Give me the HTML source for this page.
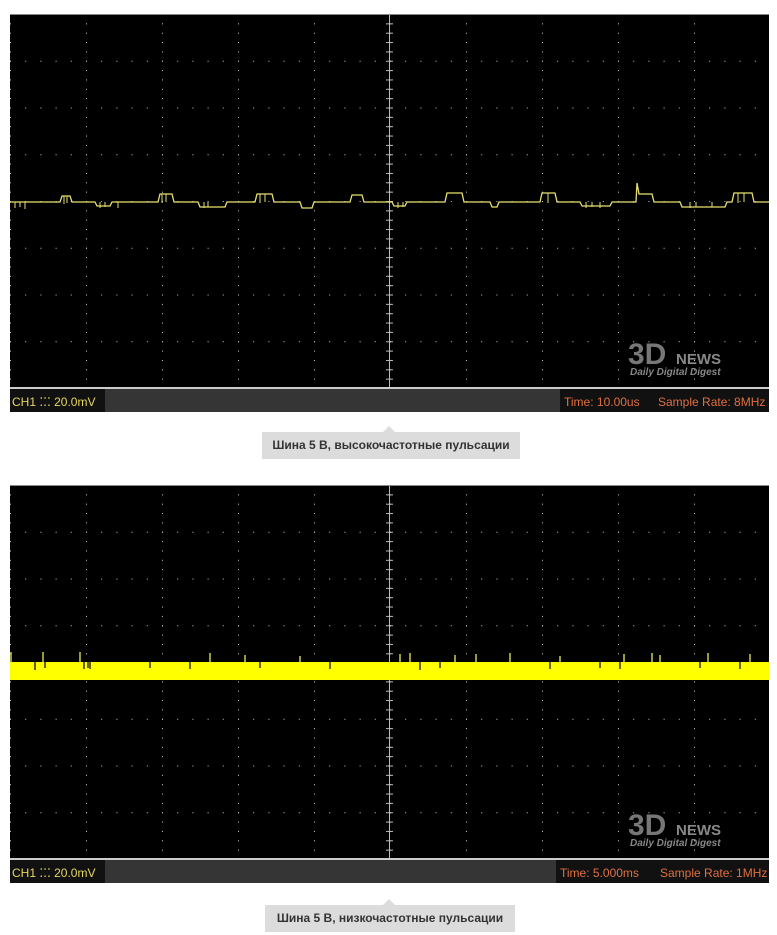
<!DOCTYPE html>
<html><head><meta charset="utf-8"><style>
html,body{margin:0;padding:0;background:#fff;width:777px;height:935px;overflow:hidden;font-family:"Liberation Sans",sans-serif}
.cap{position:absolute;background:#dcdcdc;color:#333;font:bold 12px "Liberation Sans Narrow","Liberation Sans",sans-serif;text-align:center;line-height:27px;height:27px}
.tri{position:absolute;width:0;height:0;border-left:6px solid transparent;border-right:6px solid transparent;border-bottom:6px solid #dcdcdc}
</style></head><body>
<svg width="777" height="935" style="position:absolute;left:0;top:0">
<defs>
<pattern id="pv" x="10" y="14" width="76" height="9.35" patternUnits="userSpaceOnUse"><rect x="0" y="0" width="1" height="1" fill="#ccc"/></pattern>
<pattern id="ph" x="10" y="14" width="15.2" height="46.75" patternUnits="userSpaceOnUse"><rect x="0" y="0" width="1" height="1" fill="#ccc"/></pattern>
<pattern id="pv2" x="10" y="485" width="76" height="9.35" patternUnits="userSpaceOnUse"><rect x="0" y="0" width="1" height="1" fill="#ccc"/></pattern>
<pattern id="ph2" x="10" y="485" width="15.2" height="46.75" patternUnits="userSpaceOnUse"><rect x="0" y="0" width="1" height="1" fill="#ccc"/></pattern>
<pattern id="tk" x="385" y="14" width="10" height="9.35" patternUnits="userSpaceOnUse"><rect x="1" y="0" width="7" height="1" fill="#bbb"/></pattern>
<pattern id="tk2" x="385" y="485" width="10" height="9.35" patternUnits="userSpaceOnUse"><rect x="1" y="0" width="7" height="1" fill="#bbb"/></pattern>
</defs>
<!-- scope 1 -->
<rect x="10" y="14" width="759" height="375" fill="#000"/>
<rect x="10" y="14" width="759" height="375" fill="url(#pv)"/>
<rect x="10" y="14" width="759" height="375" fill="url(#ph)"/>
<rect x="385" y="14" width="10" height="375" fill="url(#tk)"/>
<line x1="389.5" y1="14" x2="389.5" y2="389" stroke="#bbb" stroke-width="1"/>
<rect x="10" y="14" width="759" height="1" fill="#888"/>
<rect x="10" y="387" width="759" height="2" fill="#ccc"/>
<path d="M10 202 L60 202 L62 196 L70 196 L72 202 L95 202 L97 206 L110 206 L112 202 L158 202 L160 194 L172 194 L174 202 L198 202 L200 207 L225 207 L227 202 L255 202 L257 194 L272 194 L274 202 L300 202 L302 208 L312 208 L314 202 L350 202 L352 195 L362 195 L364 202 L392 202 L394 206 L405 206 L407 202 L445 202 L447 193 L462 193 L464 202 L490 202 L492 207 L497 207 L499 202 L540 202 L542 193 L555 193 L557 202 L580 202 L582 206 L610 206 L612 202 L636 202 L637 183 L639 194 L652 194 L654 202 L680 202 L682 207 L725 207 L727 202 L732 202 L734 193 L752 193 L754 202 L769 202" stroke="#e8e070" stroke-width="1.3" fill="none"/>
<path d="M15 202v6M20 202v5M25 202v7M64 196v8M67 196v7M100 202v6M105 202v5M118 202v6M162 194v9M166 194v8M204 202v6M208 202v5M260 194v9M265 194v8M398 202v6M403 202v5M548 193v10M586 202v6M592 202v5M600 202v6M690 202v6M696 202v5M712 202v5M738 193v10M744 193v9" stroke="#e8e070" stroke-width="1"/>
<rect x="10" y="389" width="759" height="23" fill="#353535"/>
<rect x="10" y="389" width="95" height="23" fill="#111"/>
<rect x="560" y="389" width="209" height="23" fill="#111"/>
<text x="12" y="406" font-size="12" fill="#e6d760" font-family="Liberation Sans Narrow, Liberation Sans, sans-serif">CH1 ⁚⁚⁚  20.0mV</text>
<text x="564" y="406" font-size="12" fill="#e07040" font-family="Liberation Sans Narrow, Liberation Sans, sans-serif">Time: 10.00us</text>
<text x="658" y="406" font-size="12" fill="#e07040" font-family="Liberation Sans Narrow, Liberation Sans, sans-serif">Sample Rate: 8MHz</text>
<text x="628" y="364" font-size="30" font-weight="bold" fill="#777" font-family="Liberation Sans, sans-serif">3D</text>
<text x="676" y="364" font-size="15" font-weight="bold" fill="#888">NEWS</text>
<text x="630" y="375" font-size="10" font-style="italic" font-weight="bold" fill="#888">Daily Digital Digest</text>
<!-- scope 2 -->
<rect x="10" y="485" width="759" height="375" fill="#000"/>
<rect x="10" y="485" width="759" height="375" fill="url(#pv2)"/>
<rect x="10" y="485" width="759" height="375" fill="url(#ph2)"/>
<rect x="385" y="485" width="10" height="375" fill="url(#tk2)"/>
<line x1="389.5" y1="485" x2="389.5" y2="860" stroke="#bbb" stroke-width="1"/>
<rect x="10" y="485" width="759" height="1" fill="#888"/>
<rect x="10" y="858" width="759" height="2" fill="#ccc"/>
<rect x="10" y="662" width="759" height="18" fill="#ffff00"/>
<path d="M11 662v-10M43 662v-10M80 662v-10M210 662v-9M245 662v-7M300 662v-6M400 662v-8M410 662v-9M455 662v-7M476 662v-8M510 662v-9M560 662v-6M624 662v-8M652 662v-9M660 662v-7M708 662v-9M750 662v-8" stroke="#ffff60" stroke-width="1.2"/>
<path d="M22 680v5M124 680v5M200 680v5M490 680v5M35 662v8M45 662v6M84 662v7M88 662v6M90 662v7M150 662v6M190 662v7M260 662v6M330 662v7M420 662v8M440 662v6M550 662v7M600 662v6M620 662v7M700 662v6M740 662v7" stroke="#000" stroke-width="1.2"/>
<rect x="10" y="860" width="759" height="23" fill="#353535"/>
<rect x="10" y="860" width="95" height="23" fill="#111"/>
<rect x="556" y="860" width="213" height="23" fill="#111"/>
<text x="12" y="877" font-size="12" fill="#e6d760" font-family="Liberation Sans Narrow, Liberation Sans, sans-serif">CH1 ⁚⁚⁚  20.0mV</text>
<text x="560" y="877" font-size="12" fill="#e07040" font-family="Liberation Sans Narrow, Liberation Sans, sans-serif">Time: 5.000ms</text>
<text x="660" y="877" font-size="12" fill="#e07040" font-family="Liberation Sans Narrow, Liberation Sans, sans-serif">Sample Rate: 1MHz</text>
<text x="628" y="835" font-size="30" font-weight="bold" fill="#777">3D</text>
<text x="676" y="835" font-size="15" font-weight="bold" fill="#888">NEWS</text>
<text x="630" y="846" font-size="10" font-style="italic" font-weight="bold" fill="#888">Daily Digital Digest</text>
</svg>
<div class="tri" style="left:383px;top:426px"></div>
<div class="cap" style="left:262px;top:432px;width:258px">Шина 5 В, высокочастотные пульсации</div>
<div class="tri" style="left:383px;top:899px"></div>
<div class="cap" style="left:265px;top:905px;width:250px">Шина 5 В, низкочастотные пульсации</div>
</body></html>
